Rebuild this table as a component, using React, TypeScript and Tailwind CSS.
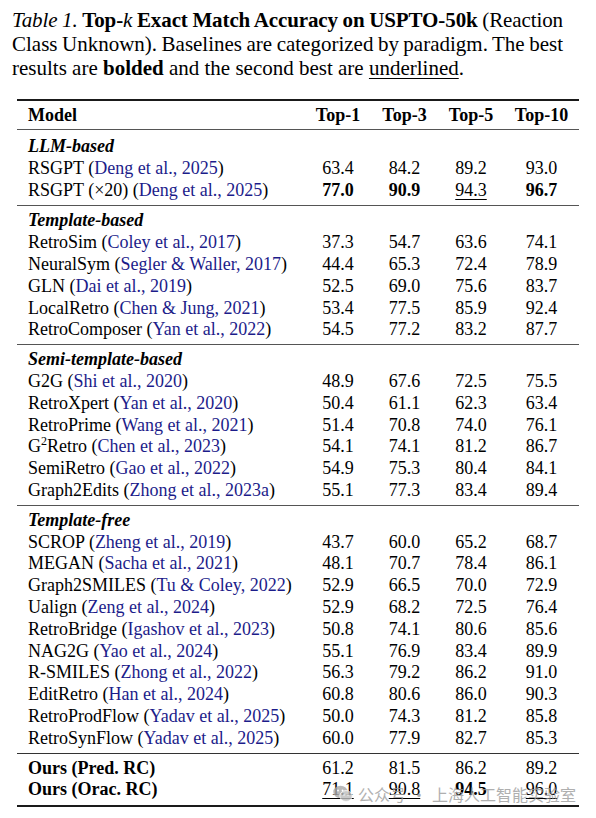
import React from "react";

type Row = { name: React.ReactNode; cite?: string; vals: string[]; bold?: boolean };
type Group = { title?: string; rows: Row[]; pad: string };

const groups: Group[] = [
  {
    title: "LLM-based",
    pad: "pt-[6px] pb-[4px]",
    rows: [
      { name: "RSGPT", cite: "Deng et al., 2025", vals: ["63.4", "84.2", "89.2", "93.0"] },
      { name: "RSGPT (×20)", cite: "Deng et al., 2025", vals: ["b:77.0", "b:90.9", "u:94.3", "b:96.7"] },
    ],
  },
  {
    title: "Template-based",
    pad: "pt-[4px] pb-[3px]",
    rows: [
      { name: "RetroSim", cite: "Coley et al., 2017", vals: ["37.3", "54.7", "63.6", "74.1"] },
      { name: "NeuralSym", cite: "Segler & Waller, 2017", vals: ["44.4", "65.3", "72.4", "78.9"] },
      { name: "GLN", cite: "Dai et al., 2019", vals: ["52.5", "69.0", "75.6", "83.7"] },
      { name: "LocalRetro", cite: "Chen & Jung, 2021", vals: ["53.4", "77.5", "85.9", "92.4"] },
      { name: "RetroComposer", cite: "Yan et al., 2022", vals: ["54.5", "77.2", "83.2", "87.7"] },
    ],
  },
  {
    title: "Semi-template-based",
    pad: "pt-[4px] pb-[3px]",
    rows: [
      { name: "G2G", cite: "Shi et al., 2020", vals: ["48.9", "67.6", "72.5", "75.5"] },
      { name: "RetroXpert", cite: "Yan et al., 2020", vals: ["50.4", "61.1", "62.3", "63.4"] },
      { name: "RetroPrime", cite: "Wang et al., 2021", vals: ["51.4", "70.8", "74.0", "76.1"] },
      {
        name: (
          <>
            G<sup className="text-[12px] -top-[7px]">2</sup>Retro
          </>
        ),
        cite: "Chen et al., 2023",
        vals: ["54.1", "74.1", "81.2", "86.7"],
      },
      { name: "SemiRetro", cite: "Gao et al., 2022", vals: ["54.9", "75.3", "80.4", "84.1"] },
      { name: "Graph2Edits", cite: "Zhong et al., 2023a", vals: ["55.1", "77.3", "83.4", "89.4"] },
    ],
  },
  {
    title: "Template-free",
    pad: "pt-[4px] pb-[3px]",
    rows: [
      { name: "SCROP", cite: "Zheng et al., 2019", vals: ["43.7", "60.0", "65.2", "68.7"] },
      { name: "MEGAN", cite: "Sacha et al., 2021", vals: ["48.1", "70.7", "78.4", "86.1"] },
      { name: "Graph2SMILES", cite: "Tu & Coley, 2022", vals: ["52.9", "66.5", "70.0", "72.9"] },
      { name: "Ualign", cite: "Zeng et al., 2024", vals: ["52.9", "68.2", "72.5", "76.4"] },
      { name: "RetroBridge", cite: "Igashov et al., 2023", vals: ["50.8", "74.1", "80.6", "85.6"] },
      { name: "NAG2G", cite: "Yao et al., 2024", vals: ["55.1", "76.9", "83.4", "89.9"] },
      { name: "R-SMILES", cite: "Zhong et al., 2022", vals: ["56.3", "79.2", "86.2", "91.0"] },
      { name: "EditRetro", cite: "Han et al., 2024", vals: ["60.8", "80.6", "86.0", "90.3"] },
      { name: "RetroProdFlow", cite: "Yadav et al., 2025", vals: ["50.0", "74.3", "81.2", "85.8"] },
      { name: "RetroSynFlow", cite: "Yadav et al., 2025", vals: ["60.0", "77.9", "82.7", "85.3"] },
    ],
  },
  {
    pad: "pt-[4px] pb-[4px]",
    rows: [
      { name: "Ours (Pred. RC)", bold: true, vals: ["61.2", "81.5", "86.2", "89.2"] },
      { name: "Ours (Orac. RC)", bold: true, vals: ["u:71.1", "u:90.8", "b:94.5", "u:96.0"] },
    ],
  },
];

const cols = "grid grid-cols-[288px_66px_67px_66px_75px]";

const Cell = ({ v }: { v: string }) => {
  if (v.startsWith("b:")) return <span className="font-bold">{v.slice(2)}</span>;
  if (v.startsWith("u:"))
    return <span className="underline decoration-1 underline-offset-[3px]">{v.slice(2)}</span>;
  return <span>{v}</span>;
};

const WeChatMark = () => (
  <svg width="20" height="18" viewBox="0 0 20 18" className="mr-[5px] shrink-0">
    <ellipse cx="7.5" cy="7" rx="7.2" ry="6.2" fill="#a8a8a8" />
    <ellipse cx="13" cy="11" rx="6.2" ry="5.4" fill="#bdbdbd" stroke="#fff" strokeWidth="0.8" />
    <circle cx="5" cy="5.5" r="0.9" fill="#fff" />
    <circle cx="9.5" cy="5.5" r="0.9" fill="#fff" />
    <circle cx="11" cy="10" r="0.7" fill="#fff" />
    <circle cx="15" cy="10" r="0.7" fill="#fff" />
  </svg>
);

export default function App() {
  return (
    <div className="relative w-[596px] h-[818px] bg-white text-black font-['Liberation_Serif',serif] overflow-hidden">
      {/* caption */}
      <div className="ml-[12px] w-[551px] pt-[8px] text-[21px] leading-[24px]">
        <div className="text-justify [text-align-last:justify] whitespace-nowrap tracking-[-0.1px] [word-spacing:-2px]">
          <i>Table 1.</i> <b>Top-</b>
          <i>k</i> <b>Exact Match Accuracy on USPTO-50k</b> (Reaction
        </div>
        <div className="text-justify [text-align-last:justify] whitespace-nowrap [word-spacing:-2px]">
          Class Unknown). Baselines are categorized by paradigm. The best
        </div>
        <div>
          results are <b>bolded</b> and the second best are{" "}
          <span className="underline decoration-1 underline-offset-[3px]">underlined</span>.
        </div>
      </div>

      {/* table */}
      <div className="mx-[17px] mt-[19px] text-[18px] border-t-2 border-[#1a1a1a] border-b-2 border-b-[#1a1a1a]">
        <div className={`${cols} h-[29px] items-center font-bold border-b border-[#555]`}>
          <div className="pl-[11px]">Model</div>
          <div className="text-center">Top-1</div>
          <div className="text-center">Top-3</div>
          <div className="text-center">Top-5</div>
          <div className="text-center">Top-10</div>
        </div>
        {groups.map((g, gi) => (
          <div
            key={gi}
            className={`${g.pad} ${gi < groups.length - 1 ? (gi === groups.length - 2 ? "border-b border-[#333]" : "border-b border-[#555]") : ""}`}
          >
            {g.title && (
              <div className="h-[21.8px] leading-[21.8px] pl-[11px] font-bold italic">{g.title}</div>
            )}
            {g.rows.map((r, ri) => (
              <div key={ri} className={`${cols} h-[21.8px] leading-[21.8px]`}>
                <div className={`pl-[11px] whitespace-nowrap ${r.bold ? "font-bold" : ""}`}>
                  {r.name}
                  {r.cite && (
                    <>
                      {" "}(<span className="text-[#1c1c8a]">{r.cite}</span>)
                    </>
                  )}
                </div>
                {r.vals.map((v, vi) => (
                  <div key={vi} className="text-center">
                    <Cell v={v} />
                  </div>
                ))}
              </div>
            ))}
          </div>
        ))}
      </div>

      {/* watermark */}
      <div className="absolute left-[333px] top-[784px] flex items-center whitespace-nowrap opacity-80 text-[#9c9c9c] text-[16px] leading-[20px] font-['Noto_Sans_CJK_SC',sans-serif]">
        <WeChatMark />
        <span>公众号</span>
        <span className="mx-[5px]">·</span>
        <span>上海人工智能实验室</span>
      </div>
    </div>
  );
}
